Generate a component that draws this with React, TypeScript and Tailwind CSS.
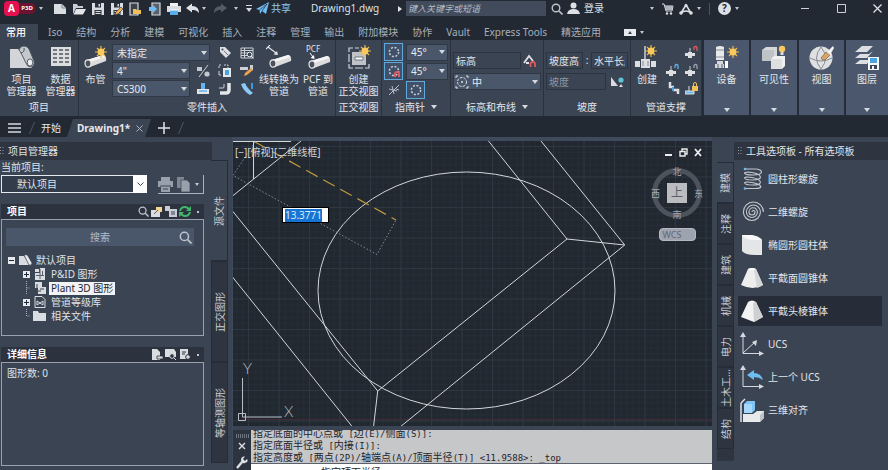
import React from "react";
import type { ReactNode } from "react";

type Kids = { children?: ReactNode };

/* ---------- small shared pieces ---------- */

function Svg({ w, h, children, className = "" }: Kids & { w: number; h: number; className?: string }) {
  return (
    <svg width={w} height={h} viewBox={`0 0 ${w} ${h}`} className={`shrink-0 ${className}`} fill="none" aria-hidden="true">
      {children}
    </svg>
  );
}

function Caret({ className = "" }: { className?: string }) {
  return (
    <Svg w={6} h={4} className={className}>
      <path d="M0 0h6L3 4z" fill="#d5d9df" />
    </Svg>
  );
}

function TinyCaret() {
  return (
    <Svg w={4} h={3}>
      <path d="M0 0h4L2 3z" fill="#c3c8d0" />
    </Svg>
  );
}

function IconButton({ label, children, className = "" }: Kids & { label: string; className?: string }) {
  return (
    <button type="button" aria-label={label} className={`flex shrink-0 items-center justify-center ${className}`}>
      {children}
    </button>
  );
}

function Drop({ label, value, className = "", icon }: { label: string; value: string; className?: string; icon?: ReactNode }) {
  return (
    <div className={`relative h-[17px] shrink-0 ${className}`}>
      <select
        aria-label={label}
        className={`block h-full w-full appearance-none border border-[#303846] bg-[#4a576b] pr-3 text-[10px] leading-[14px] text-[#e6e9ee] ${icon ? "pl-[18px]" : "pl-1"}`}
      >
        <option>{value}</option>
      </select>
      {icon && <span className="pointer-events-none absolute inset-y-0 left-[2px] flex items-center">{icon}</span>}
      <span className="pointer-events-none absolute inset-y-0 right-[3px] flex items-center">
        <Caret />
      </span>
    </div>
  );
}

/* ---------- icons ---------- */

const Sun = ({ x, y }: { x: number; y: number }) => (
  <g transform={`translate(${x} ${y})`}>
    <path d="M0-6v12M-6 0h12M-4-4l8 8M4-4l-8 8" stroke="#eeb94f" strokeWidth="1.2" />
    <circle r="3.4" fill="#fbc95b" />
  </g>
);

const PipeShape = ({ x, y }: { x: number; y: number }) => (
  <g transform={`translate(${x} ${y})`}>
    <path d="M3 5L19 0q4 1 3 6L6 12z" fill="#dcdcdc" />
    <path d="M3 5L19 0q2 0 2.600 2L6 7z" fill="#f5f5f5" />
    <ellipse cx="4" cy="8.500" rx="3" ry="3.600" fill="#4c525c" stroke="#e6e6e6" strokeWidth="1.200" />
  </g>
);

const SaveShape = () => (
  <>
    <path d="M1 1h12v12H1z" fill="#d9dce0" />
    <path d="M4 1h6v4.500H4zM3.500 8h7v5h-7z" fill="#2a313c" />
    <path d="M7.500 2h1.500v2.500H7.500zM4.500 9h5v1h-5zM4.500 11h5v1h-5z" fill="#d9dce0" />
  </>
);

const NewIcon = () => <Svg w={14} h={12}><path d="M1 1h8l4 4v6H1z" fill="#d9dce0" /><path d="M9 1v4h4" stroke="#7b828d" /></Svg>;
const OpenIcon = () => <Svg w={14} h={12}><path d="M1 11V1h4l1 2h5v2H4z" fill="#c9cdd3" /><path d="M4 6h10l-3 5.500H1.500z" fill="#e3e5e8" /></Svg>;
const SaveIcon = () => <Svg w={14} h={14}><SaveShape /></Svg>;
const SaveAsIcon = () => <Svg w={14} h={14}><SaveShape /><path d="M5 13l1-3 5-5 2 2-5 5z" fill="#f0b04e" stroke="#2a313c" strokeWidth=".6" /></Svg>;
const OpenWebIcon = () => <Svg w={13} h={14}><path d="M1 1h8v12H1z" fill="#3c434e" stroke="#d9dce0" strokeWidth="1.200" /><path d="M4 12V7h3l1 1h4v4z" fill="#f0c05a" /></Svg>;
const SaveWebIcon = () => <Svg w={13} h={14}><path d="M4 1h8v12H4z" fill="#59616d" stroke="#d9dce0" strokeWidth="1.200" /><path d="M1 9V5h4V3l4 4-4 4V9z" fill="#6dbcf3" /></Svg>;
const PrintIcon = () => <Svg w={14} h={14}><path d="M3 1h8v3H3z" fill="#f1f1f1" /><path d="M0 4h14v6H0z" fill="#d9dce0" /><path d="M3 8h8v5H3z" fill="#59aeea" /><path d="M3 8h8" stroke="#fff" /></Svg>;
const UndoIcon = ({ dim = false }: { dim?: boolean }) => (
  <Svg w={13} h={11} className={dim ? "-scale-x-100" : ""}>
    <path d="M0 5l6-4.500V3c5 0 7 3 7 7-2-2.500-4-3-7-3v2.500z" fill={dim ? "#535b68" : "#dfe2e6"} />
  </Svg>
);
const PlaneIcon = () => <Svg w={13} h={13}><path d="M0 7L13 0l-3 12-4-3-2 3-.500-4z" fill="#6dbcf3" /><path d="M3.500 8L11 2 6 9" stroke="#222933" strokeWidth=".7" /></Svg>;

const Search = ({ s = 12 }: { s?: number }) => (
  <svg width={s} height={s} viewBox="0 0 12 12" fill="none" aria-hidden="true" className="shrink-0">
    <circle cx="5" cy="5" r="3.800" stroke="#bfc4cc" strokeWidth="1.400" />
    <path d="M8 8l3.500 3.500" stroke="#bfc4cc" strokeWidth="1.600" />
  </svg>
);

const ProjectIcon = () => (
  <Svg w={26} h={24}>
    <path d="M1 4h8l2 2h7l5 17H1z" fill="#d3d5d8" />
    <path d="M10 5q1-4 5-4 3 0 5 3l5 12q1 5-3 6-4 0-5-4L12 8q-1-2-2-3z" fill="#c4c7cb" stroke="#4a515d" strokeWidth=".9" />
    <ellipse cx="21" cy="17.500" rx="2.800" ry="3.600" fill="#eceded" stroke="#4a515d" strokeWidth=".9" />
    <path d="M12 8q4-1 3-5" stroke="#4a515d" />
  </Svg>
);
const DataIcon = () => (
  <Svg w={20} h={22}>
    <path d="M0 2h20v19H0z" fill="#dcdddf" />
    {[4, 8, 12, 16].map((y) => (
      <path key={y} d={`M2 ${y + 1}h4M8 ${y + 1}h4M14 ${y + 1}h4`} stroke="#505762" strokeWidth="1.500" />
    ))}
  </Svg>
);
const RoutePipeIcon = () => <Svg w={26} h={24}><PipeShape x={1} y={10} /><Sun x={18} y={7} /></Svg>;
const LineToPipeIcon = () => (
  <Svg w={26} h={24}>
    <path d="M2 2l8 6M0 4l4-4" stroke="#e2e4e7" strokeWidth="1.200" />
    <path d="M12 10l-4.500-.500L11 6z" fill="#e2e4e7" />
    <PipeShape x={3} y={10} />
  </Svg>
);
const PcfIcon = () => (
  <Svg w={26} h={26}>
    <text x="1" y="7" fontSize="8" fill="#e2e4e7" fontFamily="Noto Sans">PCF</text>
    <path d="M5 8l3 4" stroke="#fff" /><path d="M9.500 14l-4-1L9 10z" fill="#fff" />
    <PipeShape x={3} y={11} />
  </Svg>
);
const OrthoIcon = () => (
  <Svg w={24} h={24}>
    <path d="M2 7V3h4M2 19v4h4M22 19v4h-4M2 9v8M8 23h8M8 3h4" stroke="#cfd3d8" strokeWidth="1.200" />
    <path d="M5 7h14v13H5z" fill="#bfc3c8" />
    <path d="M8 12h8v3H8z" fill="#fff" stroke="#6d737d" />
    <Sun x={18} y={6} />
  </Svg>
);
const DashCircle = ({ magnet = false }: { magnet?: boolean }) => (
  <Svg w={14} h={14}>
    <circle cx="7" cy="7" r="4.600" stroke="#c9cfd8" strokeWidth="1.500" strokeDasharray="2 1.600" />
    {magnet && <path d="M8 13V10q0-2 2-2t2 2v3" stroke="#e05a5f" strokeWidth="2" />}
  </Svg>
);
const NoSnap = () => <Svg w={14} h={14}><path d="M2 12L12 2M2 6l8 2M5 3l2 8M9 6l3 1" stroke="#b9bfc8" /></Svg>;
const TargetIcon = () => (
  <Svg w={14} h={14}>
    <circle cx="7" cy="7" r="4.500" stroke="#dfe2e6" strokeDasharray="2.500 1.200" />
    <path d="M1 1h2M11 1h2M1 13h2M11 13h2M1 1v2M13 1v2M1 11v2M13 11v2" stroke="#dfe2e6" />
    <circle cx="7" cy="7" r="1" fill="#dfe2e6" />
  </Svg>
);
const ElevIcon = () => <Svg w={14} h={14}><path d="M1 9l5-7 4 5M3 9h3" stroke="#dfe2e6" strokeWidth="1.800" /><path d="M7.500 13v-3q0-2 2.300-2T12 10v3" stroke="#e05a5f" strokeWidth="1.800" /></Svg>;
const SlopeIcon = () => <Svg w={14} h={14}><path d="M1 2l7 9H1z" fill="#d9dce0" /><path d="M9 12l2-3 2 3z" fill="#d9dce0" /><circle cx="11" cy="5" r="2.600" fill="#5fc5d3" /></Svg>;

const TagIcon = () => <Svg w={14} h={14}><path d="M2 1h5l6 6-5 5-6-6z" fill="#dcdee1" /><circle cx="4.500" cy="3.500" r="1" fill="#3b4453" /><path d="M6 5l4 4" stroke="#6c7480" /></Svg>;
const SheetIcon = () => <Svg w={14} h={14}><path d="M1 2h12v10H1z" stroke="#cdd1d7" /><path d="M1 4.500h12M1 7h7M1 9.500h6M4.500 2v10" stroke="#cdd1d7" /><circle cx="9.500" cy="8.500" r="2.300" fill="#3b4453" stroke="#e7e9ec" /><path d="M11 10l2.500 2.500" stroke="#e7e9ec" /></Svg>;
const ToggleIcon = () => <Svg w={14} h={14}><path d="M12 1L3 13" stroke="#cdd1d7" /><path d="M1 3h5v4H1z" fill="#c4c8ce" /><circle cx="11" cy="10" r="2.600" fill="#c4c8ce" /></Svg>;
const CloneIcon = () => <Svg w={14} h={14}><path d="M1 4V1h3M6 1h4v3" stroke="#cdd1d7" strokeDasharray="2 1" /><path d="M5 4h8v9H5z" fill="#e3e8ed" /><path d="M7 6h4v5H7z" fill="#4aa3e0" /><path d="M1 7v4h2" stroke="#cdd1d7" /></Svg>;
const EditPipeIcon = () => <Svg w={14} h={14}><path d="M0 3h8v3H0zM10 1h3v5h-3z" fill="#cdd1d7" /><path d="M4 12l1-3 6-5 2 2-6 5z" fill="#efa24d" /></Svg>;
const TeeIcon = () => <Svg w={14} h={14}><path d="M5 1h4v7H5z" fill="#64b5f0" /><path d="M1 7h12v5H1z" fill="#e3e5e8" /><path d="M3 9h8" stroke="#64b5f0" strokeWidth="1.500" /></Svg>;
const ElbowIcon = () => <Svg w={14} h={14}><path d="M11 1v7q0 3-3 3H2" stroke="#e3e5e8" strokeWidth="3.500" /><path d="M6 2v3q0 1-1 1H1" stroke="#cdd1d7" /></Svg>;
const BendIcon = () => <Svg w={14} h={14}><path d="M1 2l4-1q2 5 8 10l-3 2Q3 9 1 2z" fill="#8bcaf3" /><path d="M12 1v6" stroke="#3c9be0" strokeWidth="2" /></Svg>;

const SupportBig = () => <Svg w={24} h={24}><path d="M10 1v14" stroke="#cdd1d7" strokeWidth="1.500" /><path d="M0 16h5v6H0zM6 14h9v9H6zM16 16h5v6h-5z" fill="#dcdee1" /><path d="M8 16v5M13 16v5" stroke="#838a94" /><Sun x={16} y={6} /></Svg>;
const SupportSmall = ({ mark }: { mark: string }) => (
  <Svg w={14} h={14}>
    <path d="M5 3v5" stroke="#cdd1d7" /><path d="M0 8h10v3H0zM3 7h4v6H3z" fill="#dcdee1" />
    <path d="M9 5V3q0-1.500 1.500-1.500T12 3v3" stroke={mark} strokeWidth="1.300" />
  </Svg>
);
const SupportElbow = () => <Svg w={14} h={14}><path d="M4 1v5h4M7 9h5v4" stroke="#dcdee1" strokeWidth="2.500" /><path d="M7 6v4" stroke="#4aa3e0" strokeWidth="2" /></Svg>;
const SupportLock = () => <Svg w={14} h={14}><path d="M4 5v5M0 10h9v3H0z" fill="#6dbcf3" stroke="#dcdee1" /><path d="M7 5h6v5H7z" fill="#f0c05a" /><path d="M8.500 5V3q0-1.500 1.500-1.500T11.500 3v2" stroke="#f0c05a" /></Svg>;

const EquipIcon = () => (
  <Svg w={28} h={26}>
    <path d="M3 2q4-2 8 0v13H3z" fill="#e8e9ea" /><path d="M3 5h8M3 12h8" stroke="#8a919b" />
    <path d="M4 16h6v3H4zM2 19h9v4H2z" fill="#d6d8db" /><path d="M12 16h3v7h-3z" fill="#fff" /><path d="M5 19v4M9 19v4" stroke="#5d6571" />
    <Sun x={20} y={7} />
  </Svg>
);
const VisIcon = () => (
  <Svg w={26} h={26}>
    <path d="M1 5l4-3h11v11l-3 3H1z" fill="#d6d8da" /><path d="M1 5h12v11H1z" fill="#bfc2c6" />
    <path d="M10 14l3-3h11v10l-3 3H10z" fill="#f1f1f1" /><path d="M10 14h11v10H10z" fill="#dedfe0" />
    <circle cx="21" cy="4" r="3.200" fill="#fbc95b" /><path d="M19.500 7h3v3h-3z" fill="#d9dce0" />
  </Svg>
);
const ViewIcon = () => (
  <Svg w={26} h={26}>
    <circle cx="12" cy="13" r="11.500" fill="#dfe0e1" />
    <path d="M1 13q11 6 22 0M12 2q-9 11 0 22M12 2q9 11 0 22" stroke="#878d96" />
    <path d="M12 13l5-6 4 3-5 5q-3 1-4-2z" fill="#e0a261" stroke="#555b66" strokeWidth=".6" /><path d="M18 7l6-6 1 2-4 7z" fill="#f2f2f2" />
  </Svg>
);
const LayersIcon = () => (
  <Svg w={28} h={26}>
    <path d="M2 7l7-6h11l-6 6zM2 13l5-4h9l4-3-6 7zM2 19l5-4h9l2-2-4 6z" fill="#dcdee1" />
    <path d="M15 12h11v13H15z" fill="#f4f5f6" /><path d="M17 13h7v5h-7z" fill="#4aa3e0" /><path d="M17 20h7v4h-7z" fill="#3e4653" /><path d="M19 21h2v3h-2z" fill="#f4f5f6" />
  </Svg>
);

/* ---------- title bar ---------- */

const quick: [string, ReactNode][] = [
  ["新建", <NewIcon />],
  ["打开", <OpenIcon />],
  ["保存", <SaveIcon />],
  ["另存为", <SaveAsIcon />],
  ["从 Web 打开", <OpenWebIcon />],
  ["保存到 Web", <SaveWebIcon />],
  ["打印", <PrintIcon />],
  ["放弃", <UndoIcon />],
];

function TitleBar() {
  return (
    <header className="flex h-[17px] items-center text-[10px] text-[#dde1e6]">
      <button type="button" aria-label="应用程序菜单" className="ml-1 flex items-center">
        <span className="flex h-[15px] w-[15px] items-center justify-center rounded-sm bg-[#e51050] text-[10px] font-bold text-white">A</span>
        <span className="mr-1 flex h-[11px] w-4 items-center justify-center rounded-r bg-[#6a1430] text-[6px] font-bold text-white">P3D</span>
        <TinyCaret />
      </button>
      <div className="ml-[7px] flex items-center">
        {quick.map(([label, icon]) => (
          <IconButton key={label} label={label} className="w-[19px]">{icon}</IconButton>
        ))}
        <TinyCaret />
        <IconButton label="重做" className="ml-1 w-5"><UndoIcon dim /></IconButton>
        <span className="ml-1"><TinyCaret /></span>
        <IconButton label="自定义" className="ml-2">
          <Svg w={6} h={7}><path d="M0 .500h6" stroke="#d5d9df" /><path d="M0 3h6L3 7z" fill="#d5d9df" /></Svg>
        </IconButton>
        <button type="button" className="ml-1 flex items-center gap-[2px] text-[#8ccbf5]">
          <PlaneIcon />
          共享
        </button>
      </div>
      <h1 className="min-w-0 flex-1 truncate pl-5">Drawing1.dwg</h1>
      <Svg w={4} h={6}><path d="M0 0v6l4-3z" fill="#e2e4e7" /></Svg>
      <input
        aria-label="搜索帮助"
        placeholder="键入关键字或短语"
        className="ml-1 h-[15px] w-[140px] bg-[#414b5b] px-[2px] text-[9px] italic placeholder:text-[#b7bdc7]"
      />
      <IconButton label="搜索" className="ml-1 w-[13px]"><Search /></IconButton>
      <button type="button" className="ml-1 flex items-center gap-1">
        <Svg w={13} h={13}><circle cx="6.500" cy="3.500" r="3" fill="#dde1e6" /><path d="M0 12q1-5 6.500-5T13 12z" fill="#dde1e6" /></Svg>
        登录
      </button>
      <span className="ml-[46px]"><TinyCaret /></span>
      <IconButton label="应用商店" className="ml-2">
        <Svg w={12} h={12}><path d="M0 1h2l2 7h6l1-5H3" stroke="#dde1e6" /><path d="M3 3h8l-1 4H4z" fill="#aeb4bd" /><circle cx="5" cy="10.500" r="1.200" fill="#dde1e6" /><circle cx="9" cy="10.500" r="1.200" fill="#dde1e6" /></Svg>
      </IconButton>
      <IconButton label="保持连接" className="ml-[5px]">
        <Svg w={14} h={12}><path d="M2 10L7 2l5 8Q7 6 2 10z" stroke="#dde1e6" strokeWidth="1.500" /><circle cx="2" cy="10" r="1.800" fill="#dde1e6" /><circle cx="12" cy="10" r="1.800" fill="#dde1e6" /><circle cx="7" cy="2.500" r="1.500" fill="#dde1e6" /></Svg>
      </IconButton>
      <span className="ml-1"><TinyCaret /></span>
      <span className="mx-2 h-3 w-px bg-[#4b5462]" />
      <button type="button" aria-label="帮助" className="flex h-[13px] w-[13px] items-center justify-center rounded-full bg-[#dde1e6] text-[10px] font-bold text-[#222933]">?</button>
      <span className="ml-1"><TinyCaret /></span>
      <div className="ml-[62px] mr-1.5 flex items-center gap-[27px]">
        <IconButton label="最小化"><Svg w={9} h={9}><path d="M0 4.500h8" stroke="#cdd1d7" /></Svg></IconButton>
        <IconButton label="最大化"><Svg w={9} h={9}><path d="M.500.500h8v8h-8z" stroke="#cdd1d7" /></Svg></IconButton>
        <IconButton label="关闭"><Svg w={9} h={9}><path d="M.500.500l8 8M8.500.500l-8 8" stroke="#e2e4e7" strokeWidth="1.200" /></Svg></IconButton>
      </div>
    </header>
  );
}

const ribbonTabs = ["Iso", "结构", "分析", "建模", "可视化", "插入", "注释", "管理", "输出", "附加模块", "协作", "Vault", "Express Tools", "精选应用"];

function RibbonTabs() {
  return (
    <nav className="mt-[7px] flex h-4 items-center text-[10px] leading-4 text-[#a9b0ba]">
      <button type="button" className="h-4 bg-[#3b4453] pl-[6px] pr-3 font-medium text-white">常用</button>
      <div className="ml-[10px] flex gap-[14px] whitespace-nowrap">
        {ribbonTabs.map((t) => (
          <button type="button" key={t}>{t}</button>
        ))}
      </div>
      <button type="button" aria-label="最小化功能区" className="ml-[23px] flex items-center gap-1">
        <span className="flex h-[7px] w-3 items-center justify-center bg-[#e8eaed]">
          <Svg w={4} h={3}><path d="M0 3h4L2 0z" fill="#3b4453" /></Svg>
        </span>
        <TinyCaret />
      </button>
    </nav>
  );
}

/* ---------- ribbon ---------- */

function Panel({ label, caret = false, className = "", children }: Kids & { label: string; caret?: boolean; className?: string }) {
  return (
    <section className={`flex shrink-0 flex-col border-r border-[#2a313d] bg-[#3b4453] ${className}`}>
      <div className="flex h-[58px]">{children}</div>
      <div className="flex h-[18px] items-center justify-center gap-1.5 whitespace-nowrap">
        {label}
        {caret && <Caret />}
      </div>
    </section>
  );
}

function Big({ icon, text, className = "", caret = false }: { icon: ReactNode; text: string; className?: string; caret?: boolean }) {
  return (
    <button type="button" className={`flex shrink-0 flex-col items-center pt-[5px] ${className}`}>
      <span className="flex h-7 items-start justify-center">{icon}</span>
      <span className="whitespace-pre text-center leading-3">{text}</span>
      {caret && <span className="mt-auto pb-[3px]"><Caret /></span>}
    </button>
  );
}

const field = "h-[17px] border border-[#2c3440] bg-[#3b4453] px-[2px] text-[10px] leading-[15px]";
const toggle = "h-[18px] w-[19px] border border-[#5fa9dc] bg-[#3f5068]";

function Ribbon() {
  return (
    <div className="flex h-[76px] bg-[#252c37] text-[10px] text-[#e2e5ea]">
      <Panel label="项目" className="w-[79px]">
        <Big icon={<ProjectIcon />} text={"项目\n管理器"} className="w-[43px]" />
        <Big icon={<DataIcon />} text={"数据\n管理器"} className="w-[35px]" />
      </Panel>

      <Panel label="零件插入" className="w-[257px]">
        <Big icon={<RoutePipeIcon />} text="布管" className="w-[33px]" />
        <div className="flex flex-col gap-px pt-1">
          <div className="flex items-center gap-2">
            <Drop label="管线号" value="未指定" className="w-[98px]" />
            <IconButton label="指定标签"><TagIcon /></IconButton>
            <IconButton label="等级库查看器"><SheetIcon /></IconButton>
          </div>
          <div className="flex items-center gap-1.5">
            <Drop label="管径" value={'4"'} className="w-[78px]" />
            <div className="flex gap-2">
              <IconButton label="切换"><ToggleIcon /></IconButton>
              <IconButton label="克隆"><CloneIcon /></IconButton>
              <IconButton label="编辑"><EditPipeIcon /></IconButton>
            </div>
          </div>
          <div className="flex items-center gap-1.5">
            <Drop label="等级库" value="CS300" className="w-[78px]" />
            <div className="flex gap-2">
              <IconButton label="三通"><TeeIcon /></IconButton>
              <IconButton label="弯头"><ElbowIcon /></IconButton>
              <IconButton label="弯管"><BendIcon /></IconButton>
            </div>
          </div>
        </div>
        <Big icon={<LineToPipeIcon />} text={"线转换为\n管道"} className="ml-[3px] w-11" />
        <Big icon={<PcfIcon />} text={"PCF 到\n管道"} className="w-[34px]" />
      </Panel>

      <Panel label="正交视图" className="w-[46px]">
        <Big icon={<OrthoIcon />} text={"创建\n正交视图"} className="w-[45px]" />
      </Panel>

      <Panel label="指南针" caret className="w-[69px]">
        <div className="flex flex-col gap-px px-[2px] pt-[3px]">
          <div className="flex items-center gap-[3px]">
            <IconButton label="角度捕捉" className={toggle}><DashCircle /></IconButton>
            <Drop label="捕捉角度" value="45°" className="w-[42px]" />
          </div>
          <div className="flex items-center gap-[3px]">
            <IconButton label="公差捕捉" className={toggle}><DashCircle magnet /></IconButton>
            <Drop label="公差角度" value="45°" className="w-[42px]" />
          </div>
          <div className="flex items-center gap-[3px]">
            <IconButton label="关闭捕捉" className="w-[19px]"><NoSnap /></IconButton>
            <IconButton label="指南针" className={toggle}><DashCircle /></IconButton>
          </div>
        </div>
      </Panel>

      <Panel label="标高和布线" caret className="w-[93px]">
        <div className="flex w-full flex-col gap-1 px-[2px] pt-3">
          <div className="flex items-center justify-between pr-1">
            <input aria-label="标高" defaultValue="标高" className={`${field} w-[68px]`} />
            <IconButton label="拾取标高"><ElevIcon /></IconButton>
          </div>
          <Drop label="布线" value="中" icon={<TargetIcon />} className="w-full" />
        </div>
      </Panel>

      <Panel label="坡度" className="w-[87px]">
        <div className="flex w-full flex-col gap-1 px-[2px] pt-3">
          <div className="flex items-center justify-between">
            <input aria-label="坡度高" defaultValue="坡度高" className={`${field} w-[37px]`} />
            <span>:</span>
            <input aria-label="水平长度" defaultValue="水平长度" className={`${field} w-[37px]`} />
          </div>
          <div className="flex items-center gap-1">
            <input aria-label="坡度" defaultValue="坡度" className={`${field} w-[60px] text-[#8e96a3]`} />
            <IconButton label="切换坡度"><SlopeIcon /></IconButton>
          </div>
        </div>
      </Panel>

      <Panel label="管道支撑" className="w-[71px]">
        <Big icon={<SupportBig />} text="创建" className="w-8" />
        <div className="grid grow grid-cols-2 grid-rows-3 place-items-center gap-y-[2px] pb-[2px] pt-1">
          <span />
          <IconButton label="附着支撑"><SupportSmall mark="#e05a5f" /></IconButton>
          <IconButton label="转换支撑"><SupportSmall mark="#5fb1ea" /></IconButton>
          <IconButton label="编辑支撑"><SupportSmall mark="#9aa1ab" /></IconButton>
          <IconButton label="支撑弯头"><SupportElbow /></IconButton>
          <IconButton label="锁定支撑"><SupportLock /></IconButton>
        </div>
      </Panel>

      <div className="flex grow gap-[2px] pb-px pl-[2px]">
        <Big icon={<EquipIcon />} text="设备" caret className="w-[45px] bg-[#4a576c]" />
        <Big icon={<VisIcon />} text="可见性" caret className="w-[46px] bg-[#4a576c]" />
        <Big icon={<ViewIcon />} text="视图" caret className="w-[45px] bg-[#4a576c]" />
        <Big icon={<LayersIcon />} text="图层" caret className="grow bg-[#4a576c]" />
      </div>
    </div>
  );
}

/* ---------- file tabs ---------- */

const Slash = () => <Svg w={6} h={12}><path d="M5.500 0L.500 12" stroke="#4d5664" /></Svg>;

function FileTabs() {
  return (
    <nav className="mt-[3px] flex h-[18px] items-center text-[10px] text-[#e6e9ee]">
      <IconButton label="菜单" className="ml-2">
        <Svg w={13} h={10}><path d="M0 1h13M0 5h13M0 9h13" stroke="#d5d9df" strokeWidth="1.500" /></Svg>
      </IconButton>
      <span className="ml-2"><Slash /></span>
      <button type="button" className="ml-1.5">开始</button>
      <div className="ml-1.5 flex h-full items-center gap-[6px] bg-[#3b4453] pl-[10px] pr-2 [clip-path:polygon(6px_0,100%_0,calc(100%-6px)_100%,0_100%)]">
        <button type="button" className="font-bold">Drawing1*</button>
        <IconButton label="关闭 Drawing1"><Svg w={7} h={7}><path d="M.500.500l6 6M6.500.500l-6 6" stroke="#aeb4be" /></Svg></IconButton>
      </div>
      <IconButton label="新建图形" className="ml-[7px]">
        <Svg w={12} h={12}><path d="M6 0v12M0 6h12" stroke="#e2e4e7" strokeWidth="1.500" /></Svg>
      </IconButton>
      <span className="ml-2"><Slash /></span>
    </nav>
  );
}

/* ---------- project manager ---------- */

function SideTab({ children, active = false, className = "" }: Kids & { active?: boolean; className?: string }) {
  return (
    <button
      type="button"
      className={`flex w-[17px] items-center justify-center border border-[#262d38] text-[10px] text-[#c9ced6] ${active ? "border-l-0 bg-[#3b4453]" : "bg-[#2e3541]"} ${className}`}
    >
      <span className="rotate-180 whitespace-nowrap leading-3 [text-orientation:sideways] [writing-mode:vertical-rl]">{children}</span>
    </button>
  );
}

const Grip = () => <Svg w={4} h={9}><path d="M.500 0v9M3 0v9" stroke="#8f97a3" strokeDasharray="1 2" /></Svg>;

const FileIcon = () => (
  <Svg w={12} h={12}><path d="M1 1h4v3H1zM6 0h5v12H1V5h5z" fill="#d9dce0" /><path d="M6 1v10M2 7.500h8M8.500 3v4" stroke="#59616d" /></Svg>
);
const FolderIcon = () => <Svg w={13} h={12}><path d="M0 1h5l1 2h7v8H0z" fill="#d9dce0" /></Svg>;
const RootIcon = () => <Svg w={13} h={12}><path d="M0 2h5l6 9H0z" fill="#d9dce0" /><path d="M5 1q3-1 4 1l4 7q0 3-3 2z" fill="#e9eaec" stroke="#3b4453" strokeWidth=".7" /></Svg>;
const PlantIcon = () => <Svg w={12} h={12}><path d="M1 0h7v6H1zM4 5h8v7H4z" fill="#d9dce0" /><path d="M3 2v7h4M6 7h4" stroke="#3b4453" /></Svg>;
const SpecIcon = () => <Svg w={12} h={12}><path d="M1 .500h7l3 3v8H1z" stroke="#d9dce0" /><path d="M3 9V5l6 4V5z" stroke="#d9dce0" /></Svg>;

function Expander({ open = false }: { open?: boolean }) {
  return (
    <IconButton label={open ? "折叠" : "展开"}>
      <Svg w={7} h={7}><path d="M0 0h7v7H0z" fill="#e6e9ee" /><path d={open ? "M1 3.500h5" : "M1 3.500h5M3.500 1v5"} stroke="#222933" /></Svg>
    </IconButton>
  );
}

const leaves: { name: string; icon: ReactNode; open: boolean; selected?: boolean; last?: boolean }[] = [
  { name: "P&ID 图形", icon: <FileIcon />, open: true },
  { name: "Plant 3D 图形", icon: <PlantIcon />, open: false, selected: true },
  { name: "管道等级库", icon: <SpecIcon />, open: true },
  { name: "相关文件", icon: <FolderIcon />, open: false, last: true },
];

function SectionHead({ title, children }: Kids & { title: string }) {
  return (
    <div className="flex h-[15px] items-center bg-[#2c333f] pl-1.5 pr-1">
      <h2 className="grow font-bold text-white">{title}</h2>
      <div className="flex items-center gap-[2px]">
        {children}
        <span className="ml-1 mr-px h-[2px] w-[2px] bg-[#c3c8d0]" />
      </div>
    </div>
  );
}

function ProjectManager() {
  return (
    <aside className="flex w-[230px] shrink-0 flex-col pt-[5px] text-[10px] text-[#dfe3e8]">
      <div className="mr-[18px] flex h-[18px] items-center gap-1 bg-[#2e3541]">
        <Grip />
        项目管理器
      </div>
      <div className="flex min-h-0 grow">
        <div className="flex grow flex-col pb-1 pl-px pr-[7px]">
          <label htmlFor="project" className="mt-px h-3 leading-3">当前项目:</label>
          <div className="mt-[2px] flex h-[19px] justify-between">
            <div className="relative h-[18px] w-[146px]">
              <select id="project" className="block h-full w-full appearance-none border border-[#e6e9ee] bg-[#333c4a] pl-[15px] text-[10px]">
                <option>默认项目</option>
              </select>
              <span className="pointer-events-none absolute inset-y-0 right-0 flex w-[14px] items-center justify-center bg-white">
                <Svg w={7} h={5}><path d="M.500.500l3 3 3-3" stroke="#3b4453" /></Svg>
              </span>
            </div>
            <div className="flex w-[46px] items-center gap-1 border-b border-r border-[#aab1bc]">
              <IconButton label="打印"><Svg w={15} h={15}><path d="M3 0h9v4H3zM0 4h15v6H0zM3 8h9v7H3z" fill="#98a0ac" /><path d="M2 9h11M5 12h5" stroke="#3b4453" /></Svg></IconButton>
              <IconButton label="复制"><Svg w={14} h={15}><path d="M0 0h7v11H0z" fill="#7f8793" /><path d="M4 3h6l3 3v9H4z" fill="#98a0ac" stroke="#3b4453" strokeWidth=".7" /></Svg></IconButton>
              <TinyCaret />
            </div>
          </div>

          <div className="mt-[10px]">
            <SectionHead title="项目">
              <IconButton label="查找"><Search s={11} /></IconButton>
              <IconButton label="导入"><Svg w={12} h={11}><path d="M0 4h9v7H0z" fill="#d9dce0" /><path d="M5 1h6v5H5z" fill="#f0d69a" /><path d="M3 8l4-4" stroke="#59616d" /></Svg></IconButton>
              <IconButton label="链接"><Svg w={12} h={11}><path d="M0 0h5v5H0zM4 3h8v8H4z" fill="#c9cdd3" /><path d="M6 6h4M6 8h4" stroke="#3b4453" /></Svg></IconButton>
              <IconButton label="刷新"><Svg w={12} h={11}><path d="M1 5q1-4 5-4 2 0 4 2M11 6q-1 4-5 4-2 0-4-2" stroke="#43b86c" strokeWidth="2" /><path d="M12 0v5H7zM0 11V6h5z" fill="#43b86c" /></Svg></IconButton>
            </SectionHead>
          </div>
          <div className="h-[117px] border border-[#98a1ae] pl-1 pt-2">
            <div className="relative mr-[9px]">
              <input aria-label="搜索项目" placeholder="搜索" className="block h-[18px] w-full bg-[#4a576b] text-center text-[10px] placeholder:text-[#b5bcc7]" />
              <span className="pointer-events-none absolute inset-y-0 right-[2px] flex items-center"><Search s={13} /></span>
            </div>
            <ul className="mt-[7px] leading-[14px]">
              <li>
                <div className="flex h-[14px] items-center gap-1 pl-[2px]">
                  <Expander open />
                  <RootIcon />
                  默认项目
                </div>
                <ul>
                  {leaves.map((n) => (
                    <li key={n.name} className="flex h-[14px] items-center gap-[3px] pl-[17px]">
                      {n.open ? (
                        <Expander />
                      ) : (
                        <Svg w={7} h={14}><path d={n.last ? "M3.500 0v7h4" : "M3.500 0v14M3.500 7h4"} stroke="#a5acb8" strokeDasharray="1 1" /></Svg>
                      )}
                      <span className="flex w-[13px] shrink-0 justify-center">{n.icon}</span>
                      <span className={n.selected ? "bg-[#f2f3f5] px-[2px] leading-[13px] text-[#20262f]" : "px-[2px]"}>{n.name}</span>
                    </li>
                  ))}
                </ul>
              </li>
            </ul>
          </div>

          <div className="mt-[11px]">
            <SectionHead title="详细信息">
              <IconButton label="详细信息"><Svg w={12} h={11}><path d="M1 0h5l3 3v8H1z" fill="#d9dce0" /><path d="M6 7h6v3H6z" fill="#d9dce0" stroke="#2c333f" strokeWidth=".8" /></Svg></IconButton>
              <IconButton label="预览"><Svg w={12} h={11}><path d="M0 0h9l2 3v5H0z" fill="#d9dce0" /><circle cx="7" cy="7" r="2.300" fill="#2c333f" stroke="#d9dce0" /><path d="M9 9l2 2" stroke="#d9dce0" /></Svg></IconButton>
              <IconButton label="工作历史"><Svg w={12} h={11}><path d="M1 0h8v10H1z" fill="#d9dce0" /><path d="M3 3h4M3 5h3" stroke="#2c333f" /><circle cx="9" cy="8" r="2.300" fill="#d9dce0" stroke="#2c333f" /></Svg></IconButton>
            </SectionHead>
          </div>
          <div className="grow border border-[#98a1ae] px-[5px] py-[3px] leading-[14px]">图形数: 0</div>
        </div>
        <div className="mr-[2px] flex flex-col pb-[7px]">
          <SideTab active className="flex-1">源文件</SideTab>
          <SideTab className="flex-1">正交图形</SideTab>
          <SideTab className="flex-1">等轴测图形</SideTab>
        </div>
      </div>
    </aside>
  );
}

/* ---------- drawing area ---------- */

function Drawing() {
  return (
    <svg className="absolute inset-0 h-full w-full" fill="none" aria-hidden="true">
      <defs>
        <pattern id="minor" x="3" y="5" width="6.100" height="6.100" patternUnits="userSpaceOnUse">
          <path d="M0 .500h6.100M.500 0v6.100" stroke="#252d37" strokeWidth=".8" />
        </pattern>
        <pattern id="major" x="15" y="5" width="30.500" height="30.500" patternUnits="userSpaceOnUse">
          <path d="M0 .500h30.500M.500 0v30.500" stroke="#2d3641" />
        </pattern>
      </defs>
      <rect width="100%" height="100%" fill="url(#minor)" />
      <rect width="100%" height="100%" fill="url(#major)" />
      <path d="M9.500 278.500H4000" stroke="#4d2c35" strokeWidth=".8" />
      <g transform="translate(-233 -141)" stroke="#d3d6da">
        <ellipse cx="466.500" cy="290.500" rx="148.500" ry="118.500" />
        <path d="M541 141L624.700 245 400 427M488.500 141L567 239 624.700 245M567 239L377.700 391 373.500 427M377.700 391L232.500 211M232.500 277L352.500 427" />
        <path d="M232.500 196L301 141M253.500 141v38M233 141.500h58" />
        <path d="M255 142l141 78" stroke="#c09a3e" strokeWidth="1.200" strokeDasharray="13 6.500" />
        <path d="M255 142l-22 33.500 144 79 19-34.500" stroke="#828a95" strokeDasharray="1.500 2" />
        <path d="M242.500 378v39h39.500M238.500 413.500h7v7h-7z" stroke="#b9bec6" />
      </g>
      <g fill="#b9bec6" fontFamily="Lato" fontWeight="300" fontSize="15">
        <text x="10" y="233">Y</text>
        <text x="51" y="276">X</text>
      </g>
    </svg>
  );
}

function ViewCube() {
  return (
    <div className="absolute right-[9px] top-[26px] flex w-[52px] flex-col items-center text-[9px] leading-none text-[#a3a8b0]">
      <div className="relative flex h-[52px] w-[52px] items-center justify-center">
        <div className="flex h-[50px] w-[50px] items-center justify-center rounded-full border-[5px] border-[#4d535d]">
          <button type="button" className="flex h-5 w-5 items-center justify-center bg-[#babcc0] text-[12px] text-[#59606b]">上</button>
        </div>
        <span className="absolute inset-x-0 top-0 text-center">北</span>
        <span className="absolute inset-x-0 bottom-0 text-center">南</span>
        <span className="absolute inset-y-0 left-0 flex items-center">西</span>
        <span className="absolute inset-y-0 right-0 flex items-center">东</span>
      </div>
      <button type="button" className="mt-[9px] h-[13px] w-[37px] rounded border border-[#b3b8c4] bg-[#9ea3b0] pl-[3px] text-left text-[9px] leading-[11px] text-[#636875]">WCS</button>
    </div>
  );
}

function Viewport() {
  return (
    <main className="relative grow overflow-hidden bg-[#212830]">
      <Drawing />
      <div className="absolute left-[2px] top-1 text-[10px] leading-[14px] text-[#d3d6da]">[−][俯视][二维线框]</div>
      <div className="absolute left-[49px] top-[66px] flex h-4 w-[47px] items-center border border-black bg-white pl-[2px] text-[10px]">
        <span className="bg-[#1874d2] leading-[13px] text-[#d9ebff]">13.3771</span>
      </div>
      <div className="absolute right-[9px] top-[7px] flex items-center gap-[6px]">
        <IconButton label="最小化视口"><Svg w={9} h={9}><path d="M1 7h7" stroke="#eceef0" strokeWidth="2" /></Svg></IconButton>
        <IconButton label="还原视口"><Svg w={9} h={9}><path d="M3 3V1h5v5H6M1 3.500h5V8H1z" stroke="#eceef0" strokeWidth="1.400" /></Svg></IconButton>
        <IconButton label="关闭视口"><Svg w={9} h={9}><path d="M1 1l6 7M7 1L1 8" stroke="#eceef0" strokeWidth="1.800" /></Svg></IconButton>
      </div>
      <ViewCube />
    </main>
  );
}

/* Latin runs are set a size smaller than the Chinese beside them. */
function Line({ text }: { text: string }) {
  return (
    <p className="h-3 whitespace-pre">
      {text.split(/([\x20-\x7e]+)/).map((part, i) => (
        <span key={i} className={i % 2 ? "text-[9px]" : "text-[10px]"}>{part}</span>
      ))}
    </p>
  );
}

function CommandLine() {
  return (
    <div className="mt-[4px] flex h-10 shrink-0 overflow-hidden font-['DejaVu_Sans_Mono','Noto_Sans_CJK_SC',monospace]">
      <div className="flex w-[18px] shrink-0 flex-col items-center bg-[#2c3440] pt-1">
        <Svg w={13} h={4}><path d="M0 1h13M0 3h13" stroke="#b3b9c3" strokeDasharray="1 1" /></Svg>
        <IconButton label="关闭命令行" className="mt-1"><Svg w={8} h={8}><path d="M1 1l6 6M7 1L1 7" stroke="#dde1e6" strokeWidth="1.400" /></Svg></IconButton>
        <IconButton label="自定义命令行" className="mt-[6px]">
          <Svg w={12} h={13}><path d="M1 12l5-6" stroke="#dde1e6" strokeWidth="2.400" /><path d="M11 3L9 5 7 3l2-2.500Q5 0 5 4t4 3 2-4z" fill="#dde1e6" /></Svg>
        </IconButton>
      </div>
      <div className="grow overflow-hidden">
        <div className="h-[34px] overflow-hidden border-b border-[#5b626d] bg-[#c6c7c9] pl-[2px] leading-3 text-[#1f242c]">
          <div className="-mt-1">
            <Line text="指定底面的中心点或 [边(E)/侧面(S)]:" />
            <Line text="指定底面半径或 [内接(I)]:" />
            <Line text="指定高度或 [两点(2P)/轴端点(A)/顶面半径(T)] <11.9588>: _top" />
          </div>
        </div>
        <div className="h-3 bg-white pl-[70px] pt-[3px] text-[10px] leading-3 text-[#1f242c]">指定顶面半径</div>
      </div>
    </div>
  );
}

/* ---------- tool palettes ---------- */

const HelixIcon = () => (
  <Svg w={24} h={24}>
    <path
      d="M5 2H15C24 2 24 8 13 8S2 4 12 5.500 24 13 13 13 2 8.500 12 10.500 24 18 13 18 2 13.500 12 15.500 24 21.500 15 21.500H5"
      stroke="#c3c8cf"
      strokeWidth="1.200"
    />
    <circle cx="5" cy="2" r="1.300" fill="#6dbcf3" />
    <circle cx="5" cy="21.500" r="1.300" fill="#6dbcf3" />
  </Svg>
);
const SpiralIcon = () => (
  <Svg w={24} h={24}>
    <path
      d="M12 12a1.500 1.500 0 0 1 3 0a3 3 0 0 1-6 0a4.200 4.200 0 0 1 8.400 0a5.500 5.500 0 0 1-11 0a7 7 0 0 1 14 0a8.500 8.500 0 0 1-17 0a10 10 0 0 1 20 0"
      stroke="#c3c8cf"
      strokeWidth="1.100"
    />
  </Svg>
);
const CylinderIcon = () => <Svg w={24} h={24}><path d="M2 2h9q8 1 11 5v15h-7Q5 22 2 18z" fill="#e4e5e6" /><path d="M2 2h9q8 1 11 5h-7Q5 7 2 2z" fill="#f8f8f8" /></Svg>;
const ConeIcon = () => <Svg w={24} h={24}><path d="M8 3q4-2 8 0l7 16q-10 6-22 0z" fill="#eeeeee" /><path d="M8 3q4-2 8 0-4 2-8 0z" fill="#fff" /><path d="M14 4l2-1 7 16q-3 2-6 3z" fill="#d5d6d8" /></Svg>;
const PyramidIcon = () => <Svg w={24} h={24}><path d="M8 3q4-3 8 0l7 15-9 5-13-5z" fill="#f2f2f2" /><path d="M13 4l3-1 7 15-9 5z" fill="#cfd0d2" /></Svg>;
const Axes = ({ children }: Kids) => <Svg w={24} h={24}><path d="M3 4v17.500h17" stroke="#d5d9df" /><path d="M0 5l3-5 3 5zM19 19l5 2.500-5 2.500z" fill="#d5d9df" />{children}</Svg>;
const AlignIcon = () => <Svg w={24} h={25}><path d="M1 5l4-4M1 5v19" stroke="#dfe2e6" strokeWidth="1.500" /><path d="M4 6l3-3h8v9l-3 3H4z" fill="#7fc4f4" /><path d="M4 6h8v9H4z" fill="#a5d8fa" /><path d="M3 16h10l4-3h7v7l-4 4H3z" fill="#e8e9ea" /><path d="M20 24v-7l4-4v7z" fill="#bfc2c6" /></Svg>;

const tools: { name: string; icon: ReactNode; active?: boolean }[] = [
  { name: "圆柱形螺旋", icon: <HelixIcon /> },
  { name: "二维螺旋", icon: <SpiralIcon /> },
  { name: "椭圆形圆柱体", icon: <CylinderIcon /> },
  { name: "平截面圆锥体", icon: <ConeIcon /> },
  { name: "平截头棱锥体", icon: <PyramidIcon />, active: true },
  { name: "UCS", icon: <Axes><path d="M3 21L15 10" stroke="#d5d9df" /><path d="M17 8l-1 6-4-4z" fill="#d5d9df" /></Axes> },
  { name: "上一个 UCS", icon: <Axes><path d="M7 10l7-5v3q7 0 9 7-4-3-9-3v3z" fill="#6dbcf3" /></Axes> },
  { name: "三维对齐", icon: <AlignIcon /> },
];

const paletteTabs = ["建模", "注释", "建筑", "机械", "电力", "土木工…", "结构"];

function ToolPalettes() {
  return (
    <aside className="flex w-[171px] shrink-0 pt-[5px] text-[10px] text-[#e2e5ea]">
      <div className="flex flex-col pb-[9px] pt-5">
        {paletteTabs.map((t, i) => (
          <SideTab key={t} active={i === 0} className="h-[41px]">{t}</SideTab>
        ))}
        <div className="w-[17px] grow bg-[#2e3541]" />
      </div>
      <div className="grow">
        <div className="flex h-[18px] items-center gap-1 bg-[#2e3541] pl-1">
          <Grip />
          <h2 className="whitespace-nowrap">工具选项板 - 所有选项板</h2>
        </div>
        <ul className="mt-1 flex flex-col gap-[3px] pl-1 pr-[6px]">
          {tools.map((t) => (
            <li key={t.name}>
              <button type="button" className={`flex h-[30px] w-full items-center gap-1 pl-[2px] text-left ${t.active ? "bg-[#262d39]" : ""}`}>
                {t.icon}
                {t.name}
              </button>
            </li>
          ))}
        </ul>
      </div>
    </aside>
  );
}

export default function App() {
  return (
    <div className="flex h-screen flex-col overflow-hidden bg-[#222933] font-['Noto_Sans','Noto_Sans_CJK_SC',sans-serif]">
      <TitleBar />
      <RibbonTabs />
      <Ribbon />
      <FileTabs />
      <div className="flex min-h-0 grow bg-[#3b4453]">
        <ProjectManager />
        <div className="ml-[2px] flex min-w-0 grow flex-col border-l border-t-4 border-[#3f4b5d]">
          <Viewport />
          <CommandLine />
        </div>
        <div className="w-[5px] shrink-0" />
        <ToolPalettes />
      </div>
    </div>
  );
}
